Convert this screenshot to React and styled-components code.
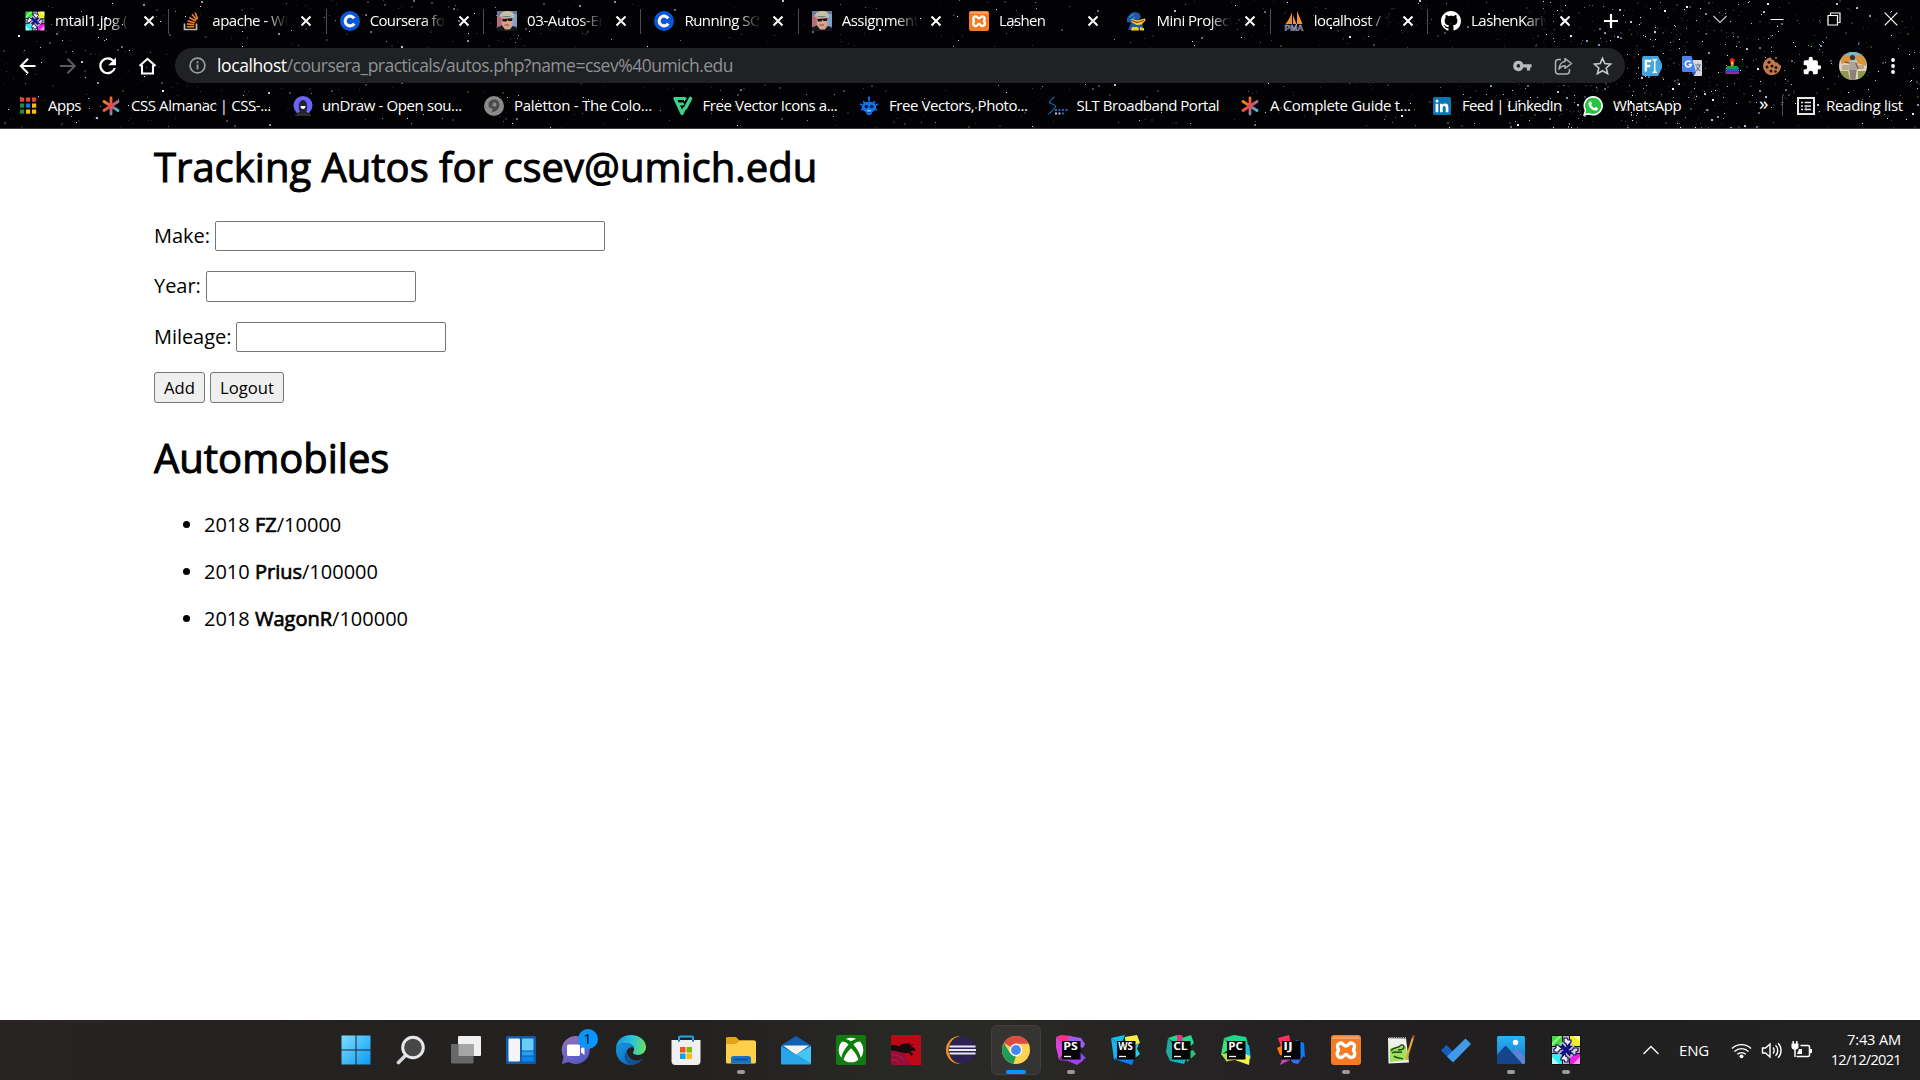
import React from "react";
import styled, { createGlobalStyle, css } from "styled-components";

const UI_FONT = '"Open Sans", "Noto Sans", sans-serif';

const GlobalStyle = createGlobalStyle`
  html, body { margin: 0; padding: 0; background: #fff; }
  body { overflow: hidden; font-family: ${UI_FONT}; }
  *, *::before, *::after { box-sizing: border-box; }
  svg { display: block; flex: none; }
`;

const Screen = styled.div`
  display: flex;
  flex-direction: column;
  width: 1920px;
  height: 1080px;
  overflow: hidden;
`;

/* ---------- browser frame ---------- */

const BrowserFrame = styled.header`
  position: relative;
  flex: none;
  display: flex;
  flex-direction: column;
  height: 129px;
  background: #020204;
  border-bottom: 1px solid #3c3c40;
  color: #fff;
`;

const StarLayer = styled.svg`
  position: absolute;
  left: 0;
  top: 0;
`;

const TabStrip = styled.div`
  position: relative;
  display: flex;
  height: 48px;
  padding-left: 12px;
`;

const TabBox = styled.div`
  display: flex;
  align-items: center;
  flex: none;
  width: 157.35px;
  height: 42px;
  padding-left: 13px;
`;

const TabTitle = styled.span`
  flex: none;
  width: 76px;
  margin-left: 10px;
  padding-bottom: 2px;
  overflow: hidden;
  white-space: nowrap;
  font-size: 15px;
  line-height: 22px;
  letter-spacing: ${(p) => p.$ls ?? -0.5}px;
  -webkit-mask-image: linear-gradient(90deg, #000 70%, transparent 100%);
  mask-image: linear-gradient(90deg, #000 70%, transparent 100%);
`;

const TabClose = styled.span`
  flex: none;
  margin-left: 12px;
`;

const TabDivider = styled.i`
  flex: none;
  width: 1px;
  height: 25px;
  margin-left: auto;
  background: ${(p) => (p.$hidden ? "transparent" : "#4d4d50")};
`;

const NewTab = styled.span`
  display: flex;
  align-items: center;
  height: 42px;
  margin-left: 17.5px;
`;

const WindowControls = styled.div`
  display: flex;
  align-items: center;
  gap: 43px;
  height: 37px;
  margin-left: auto;
  padding-right: 22px;
`;

const Toolbar = styled.div`
  position: relative;
  display: flex;
  align-items: center;
  height: 35px;
  padding-left: 16px;
`;

const NavButtons = styled.div`
  display: flex;
  gap: 16px;
  width: 159px;
`;

const Omnibox = styled.div`
  display: flex;
  align-items: center;
  width: 1450px;
  height: 35px;
  padding: 0 12px 0 14px;
  border-radius: 18px;
  background: #202124;
`;

const Url = styled.span`
  flex: 1;
  margin-left: 11px;
  padding-bottom: 1px;
  white-space: nowrap;
  font-size: 17.5px;
  line-height: 24px;
  letter-spacing: -0.5px;
  color: #8f9296;
`;

const UrlHost = styled.span`
  color: #fff;
  letter-spacing: -0.4px;
`;

const OmniActions = styled.div`
  display: flex;
  gap: 20px;
`;

const Extensions = styled.div`
  display: flex;
  align-items: center;
  gap: 20px;
  padding-left: 17px;
`;

const Avatar = styled.div`
  width: 28px;
  height: 28px;
  border-radius: 50%;
  overflow: hidden;
  margin: 0 -4px 0 -3px;
`;

const BookmarkBar = styled.div`
  position: relative;
  display: flex;
  align-items: center;
  height: 45px;
  padding-left: 18px;
`;

const Bookmark = styled.div`
  display: flex;
  align-items: center;
  flex: none;
  width: ${(p) => p.$w}px;
`;

const BookmarkLabel = styled.span`
  margin-left: ${(p) => p.$gap ?? 10}px;
  padding-bottom: 1px;
  white-space: nowrap;
  font-size: 15px;
  line-height: 20px;
  letter-spacing: ${(p) => p.$ls}px;
`;

const Overflow = styled.span`
  width: 23px;
  font-size: 19px;
  line-height: 20px;
  padding-bottom: 5px;
`;

const BarDivider = styled.i`
  width: 1px;
  height: 20px;
  margin-right: 13px;
  background: #4d4d50;
`;

/* ---------- page ---------- */

const Page = styled.main`
  flex: 1;
  padding: 11px 154px 0;
  background: #fff;
  color: #000;
  font-size: 20px;
  line-height: 27px;
`;

const Title = styled.h1`
  margin: 0;
  font-size: 40px;
  line-height: 54px;
  font-weight: 400;
  -webkit-text-stroke: 1px #000;
`;

const Form = styled.form`
  display: flex;
  flex-direction: column;
  gap: 20px;
  padding: 27px 0 28px;
`;

const Field = styled.label`
  display: flex;
  align-items: center;
  height: ${(p) => p.$h || 31}px;
  gap: 5px;
`;

const FieldName = styled.span`
  padding-bottom: 2px;
  letter-spacing: -0.05px;
`;

const Input = styled.input`
  width: ${(p) => p.$w}px;
  height: 100%;
  margin: 0;
  padding: 1px 2px;
  border: 1px solid #767676;
  border-radius: 2px;
  background: #fff;
`;

const Buttons = styled.div`
  display: flex;
  gap: 5px;
`;

const Button = styled.button`
  width: ${(p) => p.$w}px;
  height: 31px;
  padding: 0;
  border: 1px solid #767676;
  border-radius: 3px;
  background: #efefef;
  color: #000;
  font: 400 16.67px/23px ${UI_FONT};
`;

const AutoList = styled.ul`
  margin: 0;
  padding: 26px 0 0 50px;
`;

const AutoItem = styled.li`
  margin-bottom: 20px;
`;

const Model = styled.b`
  font-weight: 400;
  -webkit-text-stroke: 0.7px #000;
`;

/* ---------- taskbar ---------- */

const Taskbar = styled.footer`
  flex: none;
  display: flex;
  align-items: stretch;
  height: 60px;
  padding: 0 19px 0 330.5px;
  background: linear-gradient(90deg, #262322 0, #232020 34%, #292a26 50%, #272524 58%, #211f20 75%, #222121 100%);
  color: #fff;
`;

const TaskSlot = styled.div`
  position: relative;
  flex: none;
  display: flex;
  align-items: center;
  justify-content: center;
  width: 50px;
  height: 50px;
  margin: 5px 5.03px 5px 0;
  border-radius: 6px;
  ${(p) => p.$active && css`
    background: #353432;
    border: 1px solid #403f3d;
  `}
  &::after {
    content: ${(p) => (p.$running ? '""' : "none")};
    position: absolute;
    bottom: ${(p) => (p.$active ? 0 : 1)}px;
    width: ${(p) => (p.$active ? 20 : 8)}px;
    height: 4px;
    border-radius: 2px;
    background: ${(p) => (p.$active ? "#0a94ff" : "#9b9a9a")};
  }
`;

const Badge = styled.span`
  position: absolute;
  right: 3px;
  top: 4px;
  width: 20px;
  height: 20px;
  border-radius: 50%;
  background: #0a94ff;
  color: #000;
  font-size: 14px;
  line-height: 20px;
  text-align: center;
`;

const Tray = styled.div`
  display: flex;
  align-items: center;
  margin-left: auto;
`;

const Language = styled.span`
  width: 52px;
  margin-left: 19px;
  padding-bottom: 1px;
  font-size: 15px;
  line-height: 20px;
  letter-spacing: -0.2px;
`;

const TrayIcons = styled.div`
  display: flex;
  gap: 9px;
  width: 88px;
`;

const Clock = styled.div`
  width: 82px;
  padding-bottom: 2px;
  text-align: right;
  font-size: 14.6px;
  line-height: 20px;
  letter-spacing: -0.15px;
  white-space: nowrap;
`;

const DateLine = styled.div`
  letter-spacing: -0.72px;
`;

/* ---------- star field ---------- */

function makeStars() {
  let seed = 4127;
  const rnd = () => {
    seed = (seed * 16807) % 2147483647;
    return seed / 2147483647;
  };
  const tones = ["#1c1d25", "#292c37", "#3d4352", "#5c6a84", "#7f95b8", "#b4c3dc", "#39301f", "#e8eefa"];
  const stars = [];
  const scatter = (n, x0, x1, y0, y1, bright) => {
    for (let i = 0; i < n; i += 1) {
      const pick = Math.min(7, Math.floor(Math.pow(rnd(), bright) * 8));
      stars.push({
        x: Math.round(x0 + rnd() * (x1 - x0)),
        y: Math.round(y0 + rnd() * (y1 - y0)),
        s: rnd() > 0.75 ? 2 : 1,
        c: tones[pick],
      });
    }
  };
  scatter(400, 0, 520, 0, 128, 1.6);
  scatter(320, 520, 1180, 0, 128, 1.7);
  scatter(240, 1180, 1560, 0, 128, 1.6);
  scatter(480, 1540, 1800, 0, 128, 1.1);
  scatter(130, 1800, 1920, 0, 128, 1.3);
  scatter(100, 1440, 1700, 80, 128, 1);
  return stars;
}

const STARS = makeStars();

const Stars = () => (
  <StarLayer width="1920" height="128" viewBox="0 0 1920 128">
    {STARS.map((s, i) => (
      <rect key={i} x={s.x} y={s.y} width={s.s} height={s.s} fill={s.c} />
    ))}
  </StarLayer>
);

/* ---------- icons ---------- */

const Svg = ({ s = 20, vb = 20, children, ...rest }) => (
  <svg width={s} height={s} viewBox={`0 0 ${vb} ${vb}`} fill="none" {...rest}>{children}</svg>
);

const FourArrows = ({ s = 20 }) => (
  <Svg s={s} vb={30}>
    <rect width="30" height="30" fill="#111" />
    <path d="M1 1h10v10H1z" fill="#3be03b" />
    <path d="M1 11V8l7-7h3z" fill="#96f58a" />
    <path d="M19 1h10v10H19z" fill="#f3ef24" />
    <path d="M22 1h7v6z" fill="#fbfa9b" />
    <path d="M1 19h10v10H1z" fill="#35ecec" />
    <path d="M1 22v7h7z" fill="#b3fafa" />
    <path d="M19 19h10v10H19z" fill="#ee1fe0" />
    <path d="M22 29h7v-7z" fill="#fa9df2" />
    <path d="M12 1h6v28h-6zM1 12h28v6H1z" fill="#b4b4bc" />
    <circle cx="15" cy="15" r="8" stroke="#b4b4bc" strokeWidth="2" />
    <path d="m10.500 10.500 9 9M19.500 10.500l-9 9" stroke="#10108a" strokeWidth="3.500" />
    <path d="M13 3h3l1 2h3v2l-4 4.500-1-3-2-1z" fill="#f0f0f0" stroke="#101070" strokeWidth="1.200" />
    <path d="M27 13v3l-2 1v3h-2l-4.500-4 3-1 1-2z" fill="#d0d0d0" stroke="#101070" strokeWidth="1.200" />
    <path d="M17 27h-3l-1-2h-3v-2l4-4.500 1 3 2 1z" fill="#f0f0f0" stroke="#101070" strokeWidth="1.200" />
    <path d="M3 17v-3l2-1v-3h2l4.500 4-3 1-1 2z" fill="#f4f4f4" stroke="#101070" strokeWidth="1.200" />
  </Svg>
);

const StackOverflow = () => (
  <Svg>
    <path d="M2.500 12.500v6h12v-6" stroke="#bcbbbb" strokeWidth="1.700" />
    <path d="M4.800 15.800h7.400M5 12.900l7.300 .9M5.700 9.700l7 2.200M7.400 6.400l6.300 3.900M10 3.300l4.700 5.700M13.200 1.500l2.300 6.600" stroke="#f48024" strokeWidth="1.600" />
  </Svg>
);

const Coursera = () => (
  <Svg>
    <circle cx="10" cy="10" r="10" fill="#0b57d8" />
    <path d="M14.200 7.400A4.900 4.900 0 1 0 14.200 12.600" stroke="#fff" strokeWidth="3" />
  </Svg>
);

const Portrait = () => (
  <Svg>
    <rect width="20" height="20" fill="#667aa0" />
    <path d="M0 4h5v12H0z" fill="#b26c7b" />
    <path d="M14 3h6v12h-6z" fill="#7fa2ca" />
    <path d="M4.500 6h11v8l-3 5H8l-3-5z" fill="#d6a489" />
    <path d="M2.500 6C3 1.500 7 0 10.500 0 15 0 17.500 2 17 7 12 4 8 5 2.500 6z" fill="#c8c0a2" />
    <path d="M5 8 15.500 7.300l-.5 2.600h-3.500l-1-1.200-1 1.700H6z" fill="#151515" />
    <path d="M7.500 13.500H12v1H7.500z" fill="#83483d" />
    <path d="M0 20v-3.500l5-2 3 4h5l3-3.500 4 2V20z" fill="#15171c" />
  </Svg>
);

const Xampp = ({ s = 20 }) => (
  <Svg s={s} vb={30}>
    <rect width="30" height="30" rx="3" fill="#f47a24" />
    <path d="M1.500 1.500h27V4h-27z" fill="#fbb47c" opacity=".7" />
    <path d="M9.800 8a3.500 3.500 0 0 0-3.300 3.800c0 1.800 1.300 3.200 2.600 3.200-1.500 0-2.900 1.500-2.900 3.500 0 2.200 1.400 4 3.800 4 3 0 3-3 5-3s2 3 5 3c2.400 0 3.800-1.800 3.800-4 0-2-1.400-3.500-2.900-3.500 1.300 0 2.600-1.400 2.600-3.200A3.500 3.500 0 0 0 20.200 8C17.500 8 17.500 11 15 11S12.500 8 9.800 8z" stroke="#fff" strokeWidth="3.400" />
  </Svg>
);

const Gator = () => (
  <Svg>
    <path d="M1 7 5 2l4-1 4 1 2 4-3 4 5 4-1 5H2l3-7-4-1z" fill="#1e5aa8" />
    <path d="M3 6 8 3M4 9l5-3" stroke="#4b8bd8" />
    <path d="m6 8 5 1.500 8-2 .5 2-4 4-5 .5L5.500 11z" fill="#f5d327" />
    <path d="m6 9.500 5 2 7-2" stroke="#c22a1f" strokeWidth="1.200" />
    <path d="M6 16h6l1 3.500H5zM14 16l4 1v2.500h-4z" fill="#e9c92c" />
  </Svg>
);

const PhpMyAdmin = () => (
  <Svg>
    <path d="M8 1v12H1.500C4 10 6.500 6 8 1zM9 4l3.500 9H9zM13 0l5.500 13H13z" fill="#f29130" />
    <text x=".5" y="19.500" fontFamily="Liberation Sans" fontWeight="700" fontSize="8.500" textLength="19" lengthAdjust="spacingAndGlyphs" fill="#5c5c80" stroke="#b9b9cc" strokeWidth=".4">PMA</text>
  </Svg>
);

const GitHub = () => (
  <Svg vb={16}>
    <path fill="#fff" fillRule="evenodd" d="M8 0C3.580 0 0 3.580 0 8c0 3.540 2.290 6.530 5.470 7.590.4.070.55-.17.55-.38 0-.19-.01-.82-.01-1.490-2.010.37-2.530-.49-2.690-.94-.09-.23-.48-.94-.82-1.130-.28-.15-.68-.52-.01-.53.63-.01 1.080.58 1.230.82.72 1.210 1.870.87 2.330.66.070-.52.28-.87.51-1.070-1.780-.2-3.640-.89-3.640-3.950 0-.87.31-1.590.82-2.150-.08-.2-.36-1.020.08-2.120 0 0 .67-.21 2.200.82.64-.18 1.320-.27 2-.27s1.360.09 2 .27c1.530-1.040 2.200-.82 2.200-.82.44 1.100.16 1.920.08 2.120.51.56.82 1.270.82 2.150 0 3.070-1.870 3.750-3.650 3.950.29.25.54.73.54 1.480 0 1.070-.01 1.930-.01 2.200 0 .21.15.46.55.38A8.010 8.010 0 0 0 16 8c0-4.420-3.580-8-8-8z" />
  </Svg>
);

const Cross = () => (
  <Svg s={12} vb={12}><path d="M1.500 1.500l9 9M10.500 1.500l-9 9" stroke="#fff" strokeWidth="2" /></Svg>
);

const BackArrow = ({ color = "#fff", flip }) => (
  <Svg s={24} vb={24}>
    <path d={flip ? "M4 12h15M11.500 4.800l7.200 7.200-7.200 7.200" : "M19.500 12H5M12 4.800 4.800 12l7.200 7.200"} stroke={color} strokeWidth="2" />
  </Svg>
);

const Reload = () => (
  <Svg s={24} vb={24}>
    <path d="M17.600 7.200A7.400 7.400 0 1 0 18.800 14" stroke="#fff" strokeWidth="2.200" />
    <path d="M20 3.500v7.700h-7.700z" fill="#fff" />
  </Svg>
);

const Home = () => (
  <Svg s={24} vb={24}>
    <path d="M3.500 12 11.500 4.800l8 7.200M6 11v8.500h11V11" stroke="#fff" strokeWidth="2.100" />
  </Svg>
);

const Info = () => (
  <Svg s={17} vb={17}>
    <circle cx="8.500" cy="8.500" r="7.400" stroke="#9a9da1" strokeWidth="1.700" />
    <path d="M8.500 7.500v5M8.500 4.300v1.900" stroke="#9a9da1" strokeWidth="1.800" />
  </Svg>
);

const Key = () => (
  <Svg>
    <path fillRule="evenodd" fill="#b9babc" d="M5.500 4.500a5.500 5.500 0 1 0 5.200 7.300h3.800V15h3.500v-3.200h1.500V8.200h-8.800A5.500 5.500 0 0 0 5.500 4.500zm0 3.600a1.900 1.900 0 1 1 0 3.800 1.900 1.900 0 0 1 0-3.800z" transform="translate(.2 .5) scale(.94)" />
  </Svg>
);

const Share = () => (
  <Svg>
    <path d="M8 3.500H5.500a3 3 0 0 0-3 3v8.500a3 3 0 0 0 3 3h8a3 3 0 0 0 3-3V13" stroke="#b0b1b3" strokeWidth="1.500" />
    <path d="M12 2.600 18.500 7.500 12 12.300V9.700c-3 0-4.600 1-6 3.300.2-4 2.600-7.200 6-7.500z" stroke="#b0b1b3" strokeWidth="1.500" strokeLinejoin="round" />
  </Svg>
);

const Star = () => (
  <Svg>
    <path d="m9.500 2.200 2.300 5.400 5.900.5-4.500 3.900 1.400 5.700-5.100-3-5.100 3 1.400-5.700-4.500-3.900 5.900-.5z" stroke="#c6c7c9" strokeWidth="1.600" />
  </Svg>
);

const FormFiller = () => (
  <Svg>
    <path d="M2 0h14l4 8v4l-4 8H2a2 2 0 0 1-2-2V2a2 2 0 0 1 2-2z" fill="#41a5e2" />
    <path d="M3.800 15.500V5h5.500M3.800 10h4.500" stroke="#fff" strokeWidth="2.300" />
    <path d="M10.500 3.500c1.500 0 2.200.6 2.200 1.500v10c0 .9-.7 1.500-2.200 1.500M15 3.500c-1.500 0-2.300.6-2.300 1.500v10c0 .9.800 1.500 2.300 1.500" stroke="#fff" strokeWidth="1.500" />
  </Svg>
);

const Translate = () => (
  <Svg>
    <path d="M9 4h10a1 1 0 0 1 1 1v14a1 1 0 0 1-1 1h-7z" fill="#d5dade" />
    <path d="M13 9h6M16 7.500V9m2 0c-.5 2.500-2 4.500-4 6m.5-4.500c.8 2 2 3.500 4 4.500" stroke="#6d7b88" strokeWidth="1.200" />
    <path d="M1 0h8.500L14 16H1.500A1.500 1.500 0 0 1 0 14.500V1a1 1 0 0 1 1-1z" fill="#4c82ec" />
    <path d="m9.500 16 2.500 4 2-4z" fill="#2a56bd" />
    <path d="M8.600 6A3 3 0 1 0 9.300 8.500H6.500" stroke="#fff" strokeWidth="1.500" />
  </Svg>
);

const Lamp = () => (
  <Svg>
    <path d="M8.800 6.500h2.900V11H8.800z" fill="#f58a16" />
    <path d="M7.500 4 10.200 1.500 13 4l-1 2.800H8.500z" fill="#e3231a" />
    <path d="M9.200 5.500h2v2.500h-2z" fill="#fbd22a" />
    <path d="M5 10h10.500l1.500 3H3.500z" fill="#1f9a45" />
    <path d="M3.500 12.800H17v2.500H3.500z" fill="#3156c5" />
    <path d="M3.500 15.200H17V18H3.500z" fill="#8a2d9b" />
  </Svg>
);

const Cookie = () => (
  <Svg>
    <path d="M9 1.200c.3 2 1.400 3 3 2.700.3 1.900 1.700 3 3.700 2.600.5 1.600 1.500 2.500 3.200 2.700A9 9 0 1 1 9 1.200z" fill="#c0794f" />
    <circle cx="14" cy="2" r="1" fill="#c0794f" />
    <g fill="#1b0f0a">
      <circle cx="7" cy="6.200" r="1.500" /><circle cx="5" cy="11" r="1.500" /><circle cx="10" cy="10" r="1.500" />
      <circle cx="14" cy="11.500" r="1.500" /><circle cx="9" cy="15" r="1.500" /><circle cx="13.500" cy="15.500" r="1.200" />
    </g>
  </Svg>
);

const Puzzle = () => (
  <Svg vb={24}>
    <path fill="#fff" d="M20.500 11H19V7a2 2 0 0 0-2-2h-4V3.500a2.500 2.500 0 0 0-5 0V5H4a2 2 0 0 0-2 2v3.800h1.500a2.700 2.700 0 0 1 0 5.400H2V20a2 2 0 0 0 2 2h3.800v-1.500a2.700 2.700 0 0 1 5.400 0V22H17a2 2 0 0 0 2-2v-4h1.500a2.500 2.500 0 0 0 0-5z" />
  </Svg>
);

const ProfilePhoto = () => (
  <Svg s={28} vb={28}>
    <rect width="28" height="28" fill="#ddd2ba" />
    <path d="M0 0h28v8L0 9z" fill="#79b7c9" />
    <path d="M2 6c3-4 6-1 8-3l2 6-10 3zM17 4c4-3 8 0 10 4v6l-9-3z" fill="#d9963c" />
    <path d="M0 19h9l2 9H0zM19 19h9v9h-9z" fill="#8a9a4c" />
    <path d="M3 13h7v5H3zM19 13h6v4h-6z" fill="#b9a98e" />
    <path d="M10.500 9.500h6.500l1 10h-8z" fill="#aaa49e" />
    <path d="M10.500 18h7l-1 10h-5z" fill="#8c8078" />
    <circle cx="13.500" cy="5.500" r="2.600" fill="#4b2f25" />
    <path d="m10.500 11-5-1M17 11l2 6" stroke="#8c5c42" strokeWidth="1.600" />
  </Svg>
);

const Dots = () => (
  <Svg>
    <circle cx="10" cy="4" r="1.900" fill="#fff" /><circle cx="10" cy="10" r="1.900" fill="#fff" /><circle cx="10" cy="16" r="1.900" fill="#fff" />
  </Svg>
);

const AppsGrid = () => (
  <Svg vb={20}>
    {["#ea4335", "#ea4335", "#ea4335", "#1e8e3e", "#1a73e8", "#fbbc04", "#1e8e3e", "#fbbc04", "#fbbc04"].map((c, i) => (
      <rect key={i} x={2 + (i % 3) * 6} y={1.500 + Math.floor(i / 3) * 6} width="4.200" height="4.200" fill={c} />
    ))}
  </Svg>
);

const CssTricks = () => (
  <Svg>
    <defs><linearGradient id="csst" x1="2" y1="4" x2="18" y2="16" gradientUnits="userSpaceOnUse"><stop offset=".1" stopColor="#ff8a00" /><stop offset=".5" stopColor="#e5445f" /><stop offset=".9" stopColor="#37c5d8" /></linearGradient></defs>
    <path d="M10 2v16M3 5.500l14 9M17 5.500l-14 9" stroke="url(#csst)" strokeWidth="2.800" strokeLinecap="round" />
  </Svg>
);

const UnDraw = () => (
  <Svg>
    <circle cx="10" cy="9.500" r="9.500" fill="#6c63ff" />
    <path d="M4 20c0-3 1.500-4 3-4.500C5 14 5 4 10 4s5 10 3 11.500c1.500.5 3 1.500 3 4.500z" fill="#24242c" />
    <path d="M7.500 10h5c0 2-1 3-2.500 3s-2.500-1-2.500-3z" fill="#fff" />
    <path d="M2 18.500c4-2.500 12-2.500 16 0V20H2z" fill="#2b2b30" />
  </Svg>
);

const Paletton = () => (
  <Svg>
    <circle cx="10" cy="10" r="10" fill="#8b8b8b" />
    <path d="M10.500 3.500c-3.700 0-6 2.300-6 5.500 0 2.600 2 3.600 3.800 3.300.3 1.700 0 3-.8 4.200 4.500-.7 8-3.700 8-7.700 0-3.300-2-5.300-5-5.300z" fill="#4a4a4a" />
    <circle cx="10.500" cy="8.700" r="2.100" fill="#8b8b8b" />
  </Svg>
);

const Freebie = () => (
  <Svg>
    <path d="M2 2.500h10M2 2.500 9 17.500l2.200-4.800M4.500 8h5" stroke="#3fd089" strokeWidth="3.200" strokeLinejoin="round" strokeLinecap="round" />
    <path d="m17.500 2.500-5 9.500" stroke="#3fd089" strokeWidth="3.600" strokeLinecap="round" />
  </Svg>
);

const Robot = () => (
  <Svg>
    <path d="M10 1v4M4 5.500 6 7M16 5.500 14 7M1 8l2 1M19 8l-2 1M2 14l2-1M18 14l-2-1" stroke="#1273eb" strokeWidth="1.600" />
    <circle cx="10" cy="1.800" r="1.300" fill="#1273eb" />
    <ellipse cx="10" cy="11" rx="7.200" ry="5.500" fill="#1273eb" />
    <circle cx="7.300" cy="10.500" r="1.800" fill="#041b45" /><circle cx="12.700" cy="10.500" r="1.800" fill="#041b45" />
    <path d="M7 16c2 .8 4 .8 6 0v1.500c-2 2-4 2-6 0z" fill="#1273eb" />
    <path d="M8 14.500c1 .6 3 .6 4 0" stroke="#cfe2ff" />
  </Svg>
);

const Slt = () => (
  <Svg>
    <path d="M6.500 1C4 3 1 5 1.500 6.500S7 8 7.500 10 4 15 .5 18.500" stroke="#1767bd" strokeWidth="1.200" />
    <g fill="#2464b8"><path d="M7 13h2v2H7zM10.500 13h2v2h-2zM14 13h2v2h-2zM17.500 13h2v2h-2z" /></g>
    <g fill="#b8c2dc"><path d="M7 16.500h2v2H7zM10.500 16.500h2v2h-2z" /></g><path d="M14 16.500h2v2h-2z" fill="#2464b8" />
  </Svg>
);

const LinkedIn = () => (
  <Svg>
    <rect x="1" y="1" width="18" height="18" rx="1.500" fill="#0a77b5" />
    <path d="M3.600 7.800h2.700v8.500H3.600zM5 3.500a1.500 1.500 0 1 1 0 3 1.500 1.500 0 0 1 0-3zM8 7.800h2.600V9c.5-.9 1.500-1.400 2.600-1.400 2.500 0 3.200 1.600 3.200 4v4.700h-2.700v-4.200c0-1.200-.2-2.200-1.400-2.200-1.300 0-1.600 1-1.600 2.200v4.200H8z" fill="#fff" />
  </Svg>
);

const WhatsApp = () => (
  <Svg>
    <path d="M10.200 0a9.800 9.800 0 0 0-8.500 14.600L0 20l5.600-1.500A9.800 9.800 0 1 0 10.200 0z" fill="#fff" />
    <path d="M10.200 1.700a8.100 8.100 0 0 0-6.900 12.500l-1 3.500 3.600-1A8.100 8.100 0 1 0 10.200 1.700z" fill="#25c443" />
    <path d="M7 5.500c.5-.3 1-.2 1.200.2l.8 1.800c.1.400-.8 1.200-.8 1.500.8 1.500 1.800 2.300 3.300 3 .4 0 1-1.100 1.400-1l2 1c.4 1.600-1.300 2.700-2.600 2.600-3.800-.4-6.500-3.600-6.800-6.500 0-1 .6-2.100 1.500-2.600z" fill="#fff" />
  </Svg>
);

const ReadingList = () => (
  <Svg>
    <rect x="2" y="2" width="16" height="16" stroke="#e6e6e6" strokeWidth="2" />
    <path d="M5 6.500h2M5 10h2M5 13.500h2M8.500 6.500H15M8.500 10H15M8.500 13.500H15" stroke="#e6e6e6" strokeWidth="1.700" />
  </Svg>
);

/* taskbar icons */

const WindowsLogo = () => (
  <Svg s={30} vb={30}>
    <defs><linearGradient id="win" x1="0" y1="0" x2="30" y2="30" gradientUnits="userSpaceOnUse"><stop stopColor="#7fe0ff" /><stop offset="1" stopColor="#0798f6" /></linearGradient></defs>
    <path d="M.5.500h14v14H.5zM15.500.500h14v14h-14zM.5 15.500h14v14H.5zM15.500 15.500h14v14h-14z" fill="url(#win)" />
  </Svg>
);

const SearchGlass = () => (
  <Svg s={30} vb={30}>
    <path d="m9 21-6.500 6.500" stroke="#d4d8dc" strokeWidth="3.600" strokeLinecap="round" />
    <circle cx="17" cy="12.500" r="10.300" fill="#484647" stroke="#e6e8ea" strokeWidth="3" />
  </Svg>
);

const TaskView = () => (
  <Svg s={30} vb={30}>
    <rect x="7" y="1" width="23" height="20" rx="1" fill="#f0f0f0" />
    <rect x="0" y="9" width="22.500" height="19.500" rx="1" fill="#686868" />
    <path d="M7.500 9h15v12h-15z" fill="#a6a6a6" />
  </Svg>
);

const Widgets = () => (
  <Svg s={30} vb={30}>
    <rect y="1" width="30" height="28" rx="1.500" fill="#125ba8" />
    <rect x="2.500" y="3.500" width="11.500" height="23" rx="1" fill="#f2f4f6" />
    <rect x="16" y="3.500" width="11.500" height="12" rx=".8" fill="#66ccfa" />
    <path d="M16 16.500h11.500v4H16z" fill="#27a0ef" />
    <path d="M16 21.500h11.500v5H16z" fill="#0b86ea" />
  </Svg>
);

const Chat = () => (
  <Svg s={30} vb={30}>
    <defs><linearGradient id="chat" x1="5" y1="0" x2="20" y2="30" gradientUnits="userSpaceOnUse"><stop stopColor="#9574b8" /><stop offset="1" stopColor="#5158c8" /></linearGradient></defs>
    <path d="M14.500 1a14 14 0 1 1-7 26L1 29l1.500-7A14 14 0 0 1 14.500 1z" fill="url(#chat)" />
    <path d="M7.500 9.500h10A1.500 1.500 0 0 1 19 11v8.500a1.500 1.500 0 0 1-1.500 1.500h-10A1.500 1.500 0 0 1 6 19.500V11a1.500 1.500 0 0 1 1.500-1.500zM20 13.500l3.500-2.500v9L20 17.500z" fill="#fff" />
  </Svg>
);

const Edge = () => (
  <Svg s={30} vb={30}>
    <defs>
      <linearGradient id="edgeTop" x1="2" y1="8" x2="30" y2="12" gradientUnits="userSpaceOnUse"><stop stopColor="#1b9de2" /><stop offset=".5" stopColor="#2cc4d6" /><stop offset="1" stopColor="#6be35a" /></linearGradient>
      <linearGradient id="edgeLow" x1="2" y1="10" x2="20" y2="30" gradientUnits="userSpaceOnUse"><stop stopColor="#1594e0" /><stop offset="1" stopColor="#0a60b8" /></linearGradient>
    </defs>
    <path d="M0 14C0 6 6 0 15 0c9 0 15 6 15 12 0 5-4 8-8 8-3 0-5-1-5-2.500 0-1 1.200-1.500 1.200-3.500C18 10.500 14 8 10 8 5 8 1 11 0 14z" fill="url(#edgeTop)" />
    <path d="M0 14.500C.5 11 5 8 10 8c4 0 7 2 8 4.500-5-1.500-7.500 2-7 5.500.7 5 6 8.500 12 7.500C20.500 28.500 17.500 30 14.500 30 6 30-.5 22.500 0 14.500z" fill="url(#edgeLow)" />
    <path d="M11 15.500c-2 7 4.500 12.500 13 9.500 2-.7 3-1.500 4-2.500-3 4.500-7.500 7.500-13 7.500-6-2-8.500-9.500-4-14.500z" fill="#134f91" />
  </Svg>
);

const Store = () => (
  <Svg s={30} vb={30}>
    <path d="M8 7V2.500C8 2 8.500 1.500 9 1.500h12c.5 0 1 .5 1 1V7" stroke="#26a5e4" strokeWidth="2" />
    <path d="M.5 5h29v21a4 4 0 0 1-4 4h-21a4 4 0 0 1-4-4z" fill="#f0f0f0" />
    <path d="M9 12h5.500v5.500H9z" fill="#f25022" /><path d="M15.500 12H21v5.500h-5.500z" fill="#7fba00" />
    <path d="M9 18.500h5.500V24H9z" fill="#00a4ef" /><path d="M15.500 18.500H21V24h-5.500z" fill="#ffb900" />
    <path d="M8 5v1.800M22 5v1.800" stroke="#1684c8" strokeWidth="2" />
  </Svg>
);

const Folder = () => (
  <Svg s={30} vb={30}>
    <path d="M1.500 2H10l3.500 3.500H28V12H0V3.500A1.500 1.500 0 0 1 1.500 2z" fill="#e3a21a" />
    <path d="M0 9h10l3.500-3.500h15A1.500 1.500 0 0 1 30 7v20a1.500 1.500 0 0 1-1.500 1.500h-27A1.500 1.500 0 0 1 0 27z" fill="#fdcf4b" />
    <path d="M5 28.500v-5a2.500 2.500 0 0 1 2.500-2.500h15a2.500 2.500 0 0 1 2.500 2.500v5z" fill="#1771c4" />
    <path d="M9 24.500h12" stroke="#0d4c8d" strokeWidth="1.600" strokeLinecap="round" />
  </Svg>
);

const Mail = () => (
  <Svg s={30} vb={30}>
    <path d="M15 1 30 10.500V16H0v-5.500z" fill="#1061b5" />
    <path d="M2 10.500h26L15 20z" fill="#f3f3f3" />
    <path d="M0 11 15 19.500 30 28a1.500 1.500 0 0 1-1.500 1.500h-27A1.500 1.500 0 0 1 0 28z" fill="#27a5ea" />
    <path d="M30 11v17.500L15 19.500z" fill="#42c8f7" />
  </Svg>
);

const Xbox = () => (
  <Svg s={30} vb={30}>
    <rect width="30" height="30" rx="2" fill="#107c10" />
    <circle cx="15" cy="15" r="12.300" fill="#fff" />
    <path d="M8 4c2.500-.5 5 .8 7 2.300C17 4.800 19.500 3.500 22 4l2.500 3.200C21.500 6 19 8 17.500 9.500c4 4.500 6.500 9 7.300 13.500l-2.500 2C21.500 20.500 18 16 15 13.200 12 16 8.500 20.500 7.700 25l-2.500-2c.8-4.500 3.300-9 7.300-13.500C11 8 8.500 6 5.500 7.200z" fill="#107c10" />
  </Svg>
);

const Dragon = () => (
  <Svg s={30} vb={30}>
    <rect width="30" height="30" fill="#be0717" />
    <path d="M0 15c5-1 9 0 13 3l6 12H0z" fill="#921036" />
    <path d="M0 20c5-1 10 1 14 6M0 25c4-1 7 1 9 5" stroke="#cc154a" />
    <path d="M0 10.500c4-1 6 0 8 1 3-3 5-3.500 7-2.500l5-1.500-2.500 2.500 5-.500-3 2 4 1.500 1.500 3-2.500-.500-3.500 1 3 2-1 2.500-4-3.500c-4 2-8-1.500-17-2z" fill="#180b10" />
  </Svg>
);

const Eclipse = () => (
  <Svg s={30} vb={30}>
    <circle cx="14" cy="15" r="14" fill="#f7941e" />
    <circle cx="16.500" cy="15" r="14" fill="#262321" />
    <circle cx="16.500" cy="15" r="13.400" fill="#2c2255" />
    <path d="M3.500 11.500h26M3 15h27M3.500 18.500h26" stroke="#e9e8ef" strokeWidth="2.200" />
  </Svg>
);

const Chrome = () => (
  <Svg s={30} vb={30}>
    <circle cx="15" cy="15" r="14" fill="#fcd24e" />
    <path d="M15 15 2.900 8A14 14 0 0 1 27.500 8.700H15z" fill="#dc4b40" />
    <path d="M2.900 8 9.300 18.500 15 21l-2.500 7.800A14 14 0 0 1 2.900 8z" fill="#1f9d58" />
    <circle cx="15" cy="15" r="6.400" fill="#f4f6f8" />
    <circle cx="15" cy="15" r="4.900" fill="#4688f1" />
  </Svg>
);

const SHARDS = {
  PS: [["M0 2 5 0l11 1-8 10z", "#fc318c"], ["M0 2v10l3 13 8-12z", "#d444d8"], ["m13 1 12 2 4 6-2 4-15-4z", "#a05cf5"], ["m27 12-4 4 7 7-6 3-4-8z", "#7b4ff0"], ["m3 25 9 1 9 4 7-5-10-9z", "#a03ff0"]],
  WS: [["M0 3 14 0l-4 10z", "#07c3f2"], ["M0 3 3 25l10-12z", "#19b4ee"], ["m14 2 12-2 3 8-14 6z", "#f7ee4c"], ["m28 8-2 6 3 5-5 4-5-9z", "#21d4e8"], ["m3 24 18 6 3-9-10-6z", "#087cfa"]],
  CL: [["M2 3 11 0v10z", "#21d789"], ["m2 3-2 14 4 9 8-12z", "#1fa9a0"], ["m11 0 5 0 3 9-8 1z", "#e8327d"], ["m16 3 9-3 3 8-9 8z", "#24d78c"], ["m27 15-7 2 1 10 9-8z", "#2fbf71"], ["m4 26 14 3 4-9-10-5z", "#0bb3c4"]],
  PC: [["M3 3 13 0l12 2 2 8-15 3z", "#21d789"], ["M3 3 0 20l10-7z", "#3ee07b"], ["m24 10 4 0 2 14-10-6z", "#1bbbe0"], ["m0 19 6 8 8-10z", "#a6e64a"], ["m5 26 9-1 14 5 1-9-12-5z", "#f5f14d"]],
  IJ: [["M2 3 13 0l2 9-9 6z", "#fe315d"], ["m1 13 8-4 1 12-6-1z", "#f97a12"], ["m20 5 8 3 1 14-8-3z", "#087cfa"], ["m4 30 3-9 9 3z", "#c843b8"], ["m14 24 14-4-6 9-5-1z", "#3a6cf0"]],
};

const JetBrains = ({ label }) => (
  <Svg s={30} vb={30}>
    {SHARDS[label].map(([d, c]) => <path key={d} d={d} fill={c} />)}
    <rect x="6" y="6" width="18.500" height="18.500" fill="#050505" />
    <text x="7.200" y="15.400" fontFamily="Open Sans" fontWeight="700" fontSize="10.500" textLength={label === "IJ" ? 9.500 : 14.500} lengthAdjust="spacingAndGlyphs" fill="#fff">{label}</text>
    <path d="M8 21.500h7" stroke="#fff" strokeWidth="1.300" />
  </Svg>
);

const NotepadPlus = () => (
  <Svg s={30} vb={30}>
    <path d="m2 3 18 .5 3 24L2.500 28.500z" fill="#f1f1ec" />
    <path d="M3 3h17" stroke="#aaa" strokeWidth="2" strokeDasharray="1.300 1" />
    <path d="m4 13 16-2 1.500 14L4 27z" fill="#a0e05a" />
    <path d="M5 16c2-4 7-3 9-5 1-2 4-1 4 1 0 2-3 3-6 3M6 18c3-2 6 0 10-1M8 21c2 3 6 1 9 3" stroke="#23481c" strokeWidth="1.500" />
    <path d="m27 2.500-5 16-1.500 6" stroke="#e9a53b" strokeWidth="2.200" />
    <path d="m27.700.500-.9 3" stroke="#c24a35" strokeWidth="2.200" />
  </Svg>
);

const Todo = () => (
  <Svg s={30} vb={30}>
    <path d="m0 15.500 5.500-5.500 8.500 8.500-5.500 5.500z" fill="#1a5cbe" />
    <path d="m6 21.500 18.500-18 5.500 5.500L12 27.500z" fill="#3f9bea" />
  </Svg>
);

const Photos = () => (
  <Svg s={30} vb={30}>
    <defs><linearGradient id="ph" x1="0" y1="1" x2="0" y2="29" gradientUnits="userSpaceOnUse"><stop stopColor="#28b3ee" /><stop offset="1" stopColor="#1576d0" /></linearGradient></defs>
    <rect x="1" y="1" width="28" height="28" rx="1.500" fill="url(#ph)" />
    <circle cx="19.500" cy="7.500" r="2.700" fill="#fff" />
    <path d="m13 22 6-8c.6-.7 1.400-.7 2 0l8 8v5.500a1.500 1.500 0 0 1-1.500 1.500H15z" fill="#5d83d8" />
    <path d="M1 20 8.500 11.500c.6-.7 1.500-.7 2.100 0L26.500 29h-24A1.500 1.500 0 0 1 1 27.500z" fill="#15448a" />
  </Svg>
);

const TrayChevron = () => (
  <Svg s={18} vb={18}><path d="m1.500 13 7.500-7.500 7.500 7.500" stroke="#fff" strokeWidth="1.300" /></Svg>
);

const Wifi = () => (
  <Svg s={21} vb={21}>
    <path d="M1 8.500a13.500 13.500 0 0 1 19 0M3.500 11.500a10 10 0 0 1 14 0M6.300 14.300a6 6 0 0 1 8.400 0" stroke="#fff" strokeWidth="1.400" />
    <circle cx="10.500" cy="16.300" r="1.900" fill="#fff" />
  </Svg>
);

const Speaker = () => (
  <Svg s={21} vb={21}>
    <path d="M1.500 8v5h3l4.500 4V4L4.500 8z" stroke="#fff" strokeWidth="1.400" />
    <path d="M12 7.500c1.500 1.500 1.500 4.500 0 6M14.500 5.200c3 2.500 3 8 0 10.600M17 3.200c4 3.500 4 11 0 14.600" stroke="#fff" strokeWidth="1.400" />
  </Svg>
);

const Battery = () => (
  <Svg s={21} vb={21}>
    <path d="M9.500 5.500H17A1.500 1.500 0 0 1 18.500 7v8a1.500 1.500 0 0 1-1.500 1.500H5.500" stroke="#fff" strokeWidth="1.500" />
    <path d="M19 9h2v4h-2z" fill="#fff" />
    <path d="M8 9h3v5H6z" fill="#fff" />
    <path d="M2.200 1v3M5.800 1v3" stroke="#fff" strokeWidth="1.500" />
    <path d="M.5 3.500h7V7c0 1.500-1.300 2.500-2.500 2.500H3C1.500 9.500.500 8.500.500 7z" fill="#fff" />
    <path d="M4 9v8" stroke="#fff" strokeWidth="1.500" />
  </Svg>
);

/* ---------- data ---------- */

const TABS = [
  { icon: <FourArrows />, title: "mtail1.jpg (", ls: -0.42 },
  { icon: <StackOverflow />, title: "apache - Wh" },
  { icon: <Coursera />, title: "Coursera for", ls: -0.65 },
  { icon: <Portrait />, title: "03-Autos-Em", ls: -0.4 },
  { icon: <Coursera />, title: "Running SQL" },
  { icon: <Portrait />, title: "Assignment:" },
  { icon: <Xampp />, title: "Lashen", ls: -0.65 },
  { icon: <Gator />, title: "Mini Project" },
  { icon: <PhpMyAdmin />, title: "localhost / 1" },
  { icon: <GitHub />, title: "LashenKariy", ls: -0.55 },
].map((t, i) => ({ ...t, hideDivider: i === 5 || i === 6 || i === 9 }));

const BOOKMARKS = [
  { icon: <AppsGrid />, label: "Apps", w: 83, ls: -0.5 },
  { icon: <CssTricks />, label: "CSS Almanac | CSS-...", w: 192, ls: -0.42 },
  { icon: <UnDraw />, label: "unDraw - Open sou...", w: 191, ls: -0.39, gap: 9 },
  { icon: <Paletton />, label: "Paletton - The Colo...", w: 189, ls: -0.28 },
  { icon: <Freebie />, label: "Free Vector Icons a...", w: 186, ls: -0.44, gap: 9.5 },
  { icon: <Robot />, label: "Free Vectors, Photo...", w: 189, ls: -0.43 },
  { icon: <Slt />, label: "SLT Broadband Portal", w: 192, ls: -0.47, gap: 8.5 },
  { icon: <CssTricks />, label: "A Complete Guide t...", w: 192, ls: -0.32 },
  { icon: <LinkedIn />, label: "Feed | LinkedIn", w: 151, ls: -0.66 },
  { icon: <WhatsApp />, label: "WhatsApp", w: 176, ls: -0.45 },
];

const TASKS = [
  { icon: <WindowsLogo /> },
  { icon: <SearchGlass /> },
  { icon: <TaskView /> },
  { icon: <Widgets /> },
  { icon: <Chat />, badge: "1" },
  { icon: <Edge /> },
  { icon: <Store /> },
  { icon: <Folder />, running: true },
  { icon: <Mail /> },
  { icon: <Xbox /> },
  { icon: <Dragon /> },
  { icon: <Eclipse /> },
  { icon: <Chrome />, running: true, active: true },
  { icon: <JetBrains label="PS" />, running: true },
  { icon: <JetBrains label="WS" /> },
  { icon: <JetBrains label="CL" /> },
  { icon: <JetBrains label="PC" /> },
  { icon: <JetBrains label="IJ" /> },
  { icon: <Xampp s={30} />, running: true },
  { icon: <NotepadPlus /> },
  { icon: <Todo /> },
  { icon: <Photos />, running: true },
  { icon: <FourArrows s={30} />, running: true },
];

const AUTOS = [
  { year: 2018, make: "FZ", mileage: 10000 },
  { year: 2010, make: "Prius", mileage: 100000 },
  { year: 2018, make: "WagonR", mileage: 100000 },
];

/* ---------- app ---------- */

const Browser = () => (
  <BrowserFrame>
    <Stars />
    <TabStrip>
      {TABS.map((t, i) => (
        <TabBox key={i}>
          {t.icon}
          <TabTitle $ls={t.ls}>{t.title}</TabTitle>
          <TabClose><Cross /></TabClose>
          <TabDivider $hidden={t.hideDivider} />
        </TabBox>
      ))}
      <NewTab><Svg s={16} vb={16}><path d="M8 1v14M1 8h14" stroke="#fff" strokeWidth="2.200" /></Svg></NewTab>
      <WindowControls>
        <Svg s={14} vb={14}><path d="m.5 4 6.500 6.500L13.500 4" stroke="#ccc" strokeWidth="1.200" /></Svg>
        <Svg s={14} vb={14}><path d="M.5 7.500h13" stroke="#fff" strokeWidth="1" /></Svg>
        <Svg s={14} vb={14}><path d="M1 3.500h9.500V13H1zM3.500 3.500V1H13v9.500h-2.500" stroke="#fff" strokeWidth="1.200" /></Svg>
        <Svg s={14} vb={14}><path d="m.7.700 12.600 12.600M13.300.700.700 13.300" stroke="#fff" strokeWidth="1.200" /></Svg>
      </WindowControls>
    </TabStrip>
    <Toolbar>
      <NavButtons><BackArrow /><BackArrow color="#5d5d60" flip /><Reload /><Home /></NavButtons>
      <Omnibox>
        <Info />
        <Url><UrlHost>localhost</UrlHost>/coursera_practicals/autos.php?name=csev%40umich.edu</Url>
        <OmniActions><Key /><Share /><Star /></OmniActions>
      </Omnibox>
      <Extensions>
        <FormFiller /><Translate /><Lamp /><Cookie /><Puzzle />
        <Avatar><ProfilePhoto /></Avatar>
        <Dots />
      </Extensions>
    </Toolbar>
    <BookmarkBar>
      {BOOKMARKS.map((b) => (
        <Bookmark key={b.label} $w={b.w}>
          {b.icon}
          <BookmarkLabel $ls={b.ls} $gap={b.gap}>{b.label}</BookmarkLabel>
        </Bookmark>
      ))}
      <Overflow>»</Overflow>
      <BarDivider />
      <ReadingList />
      <BookmarkLabel $ls={-0.28}>Reading list</BookmarkLabel>
    </BookmarkBar>
  </BrowserFrame>
);

export default function App() {
  return (
    <Screen>
      <GlobalStyle />
      <Browser />
      <Page>
        <Title>Tracking Autos for csev@umich.edu</Title>
        <Form>
          <Field $h={30}><FieldName>Make:</FieldName><Input $w={390} /></Field>
          <Field><FieldName>Year:</FieldName><Input $w={210} /></Field>
          <Field $h={30}><FieldName>Mileage:</FieldName><Input $w={210} /></Field>
          <Buttons>
            <Button type="button" $w={51}>Add</Button>
            <Button type="button" $w={74}>Logout</Button>
          </Buttons>
        </Form>
        <Title as="h2">Automobiles</Title>
        <AutoList>
          {AUTOS.map((a, i) => (
            <AutoItem key={i}>{a.year} <Model>{a.make}</Model>/{a.mileage}</AutoItem>
          ))}
        </AutoList>
      </Page>
      <Taskbar>
        {TASKS.map((t, i) => (
          <TaskSlot key={i} $active={t.active} $running={t.running}>
            {t.icon}
            {t.badge && <Badge>{t.badge}</Badge>}
          </TaskSlot>
        ))}
        <Tray>
          <TrayChevron />
          <Language>ENG</Language>
          <TrayIcons><Wifi /><Speaker /><Battery /></TrayIcons>
          <Clock>
            <div>7:43 AM</div>
            <DateLine>12/12/2021</DateLine>
          </Clock>
        </Tray>
      </Taskbar>
    </Screen>
  );
}
